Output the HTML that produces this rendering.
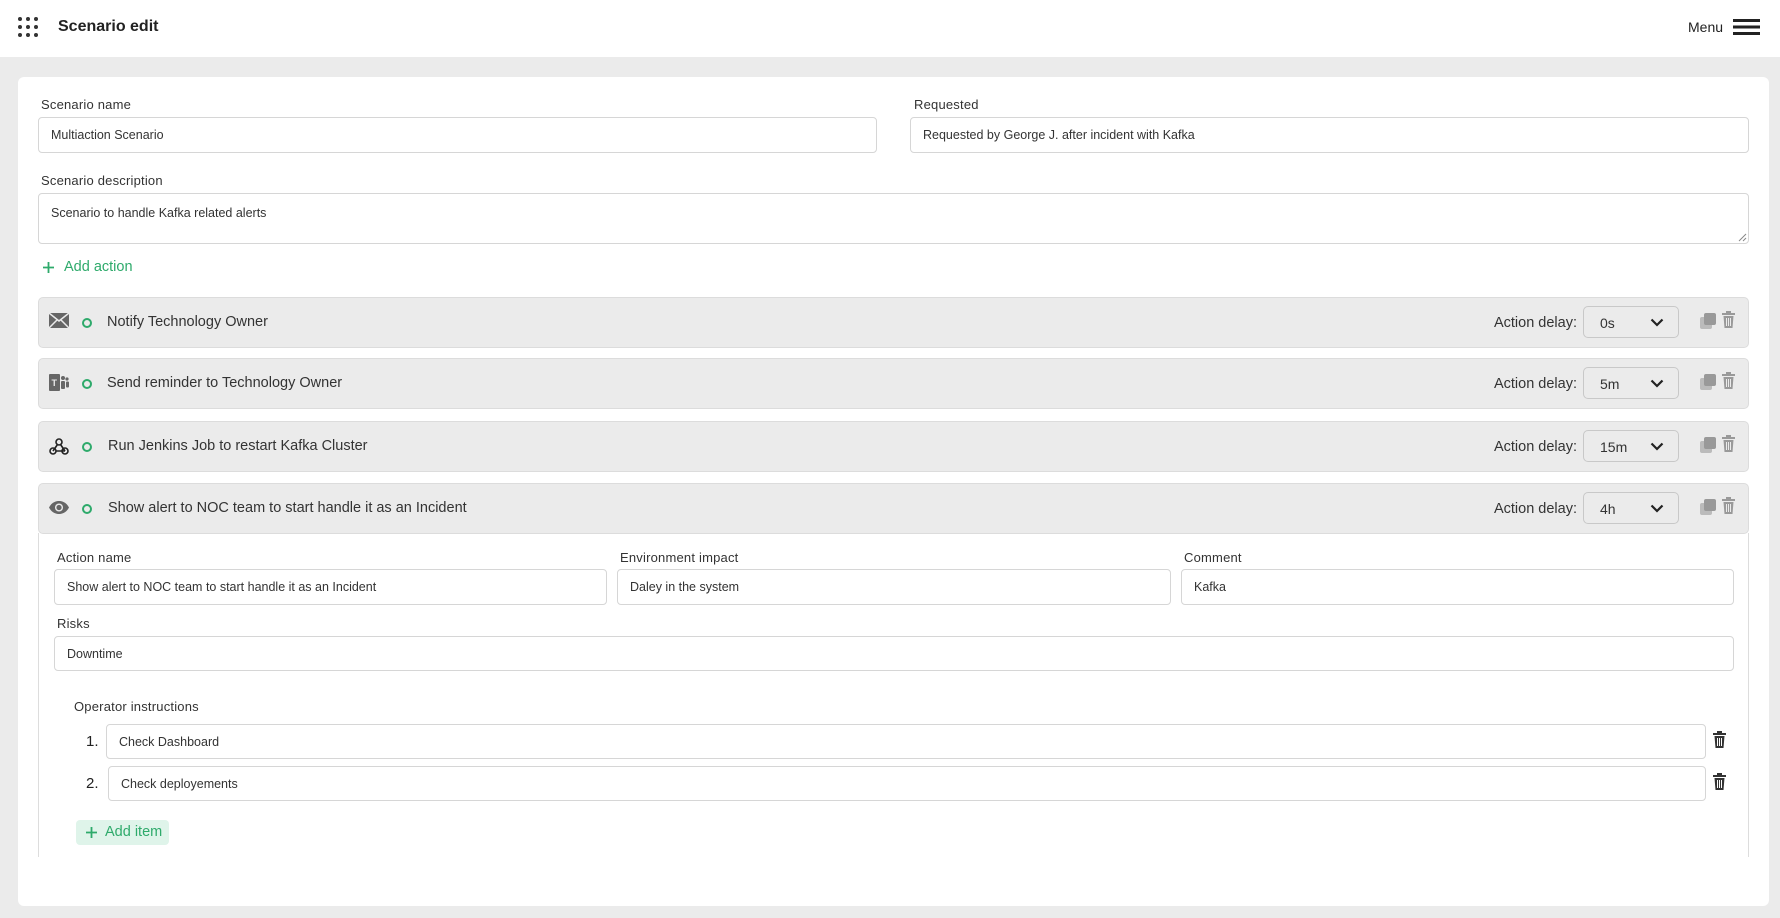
<!DOCTYPE html>
<html><head><meta charset="utf-8"><style>
*{box-sizing:border-box;margin:0;padding:0}
body{width:1780px;height:918px;background:#ebebeb;font-family:"Liberation Sans",sans-serif;color:#222;position:relative;overflow:hidden}
.a{position:absolute}
.hdr{left:0;top:0;width:1780px;height:57px;background:#fff}
.card{left:18px;top:77px;width:1751px;height:829px;background:#fff;border-radius:6px}
.lbl{font-size:13px;color:#333;letter-spacing:.2px}
.inp{background:#fff;border:1px solid #d6d6d6;border-radius:4px;font-size:12.5px;color:#333;padding-left:12px;display:flex;align-items:center}
.row{left:38px;width:1711px;height:51px;background:#ebebeb;border:1px solid #dcdcdc;border-radius:5px}
.row .t{position:absolute;left:68px;top:16px;font-size:14.5px;color:#333}
.row .ic{position:absolute;left:10px;top:15px}
.row .dot{position:absolute;left:43px;top:20px;width:10px;height:10px;border:2.5px solid #2eaa6b;border-radius:50%}
.row .dl{position:absolute;right:171px;top:17px;font-size:14.5px;color:#333}
.row .sel{position:absolute;left:1544px;top:8px;width:96px;height:32px;border:1px solid #c8c8c8;border-radius:5px;font-size:14px;color:#333;padding:8px 0 0 16px}
.row .sel svg{position:absolute;right:14px;top:11px}
.row .cp{position:absolute;left:1661px;top:15px}
.row .tr{position:absolute;left:1683px;top:13px}
</style></head><body>
<div class="a hdr">
 <svg class="a" style="left:18px;top:17px" width="20" height="20" viewBox="0 0 20 20" fill="#333"><circle cx="2" cy="2" r="2"/><circle cx="10" cy="2" r="2"/><circle cx="18" cy="2" r="2"/><circle cx="2" cy="10" r="2"/><circle cx="10" cy="10" r="2"/><circle cx="18" cy="10" r="2"/><circle cx="2" cy="18" r="2"/><circle cx="10" cy="18" r="2"/><circle cx="18" cy="18" r="2"/></svg>
 <div class="a" style="left:58px;top:18px;font-size:16px;font-weight:bold;color:#222">Scenario edit</div>
 <div class="a" style="left:1688px;top:19px;font-size:14px;color:#222">Menu</div>
 <svg class="a" style="left:1733px;top:19px" width="27" height="16"><rect y="0" width="27" height="3" fill="#222"/><rect y="6.5" width="27" height="3" fill="#222"/><rect y="13" width="27" height="3" fill="#222"/></svg>
</div>
<div class="a card"></div>
<div class="a lbl" style="left:41px;top:97px">Scenario name</div>
<div class="a inp" style="left:38px;top:117px;width:839px;height:36px">Multiaction Scenario</div>
<div class="a lbl" style="left:914px;top:97px">Requested</div>
<div class="a inp" style="left:910px;top:117px;width:839px;height:36px">Requested by George J. after incident with Kafka</div>
<div class="a lbl" style="left:41px;top:173px">Scenario description</div>
<div class="a inp" style="left:38px;top:193px;width:1711px;height:51px;align-items:flex-start;padding-top:12px">Scenario to handle Kafka related alerts</div>
<svg class="a" style="left:1738px;top:233px" width="9" height="9"><path d="M1 8L8 1M5 8L8 5" stroke="#888" stroke-width="1"/></svg>
<svg class="a" style="left:43px;top:262px" width="11" height="11"><path d="M5.5 0V11M0 5.5H11" stroke="#2eaa6b" stroke-width="1.8"/></svg>
<div class="a" style="left:64px;top:259px;font-size:14.5px;color:#2eaa6b">Add action</div>

<div class="a row" style="top:297px">
 <svg class="ic" width="20" height="15" viewBox="0 0 20 15"><rect width="20" height="15" fill="#666"/><path d="M0 0L10 8L20 0M0 15L8 7M20 15L12 7" stroke="#ebebeb" stroke-width="1.5" fill="none"/></svg>
 <div class="dot"></div><div class="t">Notify Technology Owner</div>
 <div class="dl">Action delay:</div><div class="sel">0s<svg width="14" height="9"><path d="M1.5 1.5L7 7L12.5 1.5" stroke="#222" stroke-width="2.2" fill="none"/></svg></div>
 <svg class="cp" width="16" height="16"><rect x="0" y="4" width="12" height="12" rx="2" fill="#bbb"/><rect x="4" y="0" width="12" height="12" rx="2" fill="#999"/></svg>
 <svg class="tr" width="13" height="17"><rect x="4" y="0" width="5" height="2" fill="#999"/><rect x="0" y="2" width="13" height="2" fill="#999"/><path d="M1.5 5H11.5L10.5 17H2.5Z" fill="#999"/><path d="M4.5 7V15M6.5 7V15M8.5 7V15" stroke="#ebebeb" stroke-width="1"/></svg>
</div>
<div class="a row" style="top:358px">
 <svg class="ic" width="20" height="17" viewBox="0 0 20 17"><rect x="0" y="0" width="11" height="17" rx="1" fill="#666"/><text x="2.5" y="12" font-size="9" font-weight="bold" fill="#ebebeb" font-family="Liberation Sans">T</text><circle cx="14" cy="4" r="2" fill="#666"/><circle cx="18" cy="5" r="1.6" fill="#666"/><rect x="12" y="7" width="4" height="8" rx="1" fill="#666"/><rect x="17" y="7.5" width="3" height="6" rx="1" fill="#666"/></svg>
 <div class="dot"></div><div class="t">Send reminder to Technology Owner</div>
 <div class="dl">Action delay:</div><div class="sel">5m<svg width="14" height="9"><path d="M1.5 1.5L7 7L12.5 1.5" stroke="#222" stroke-width="2.2" fill="none"/></svg></div>
 <svg class="cp" width="16" height="16"><rect x="0" y="4" width="12" height="12" rx="2" fill="#bbb"/><rect x="4" y="0" width="12" height="12" rx="2" fill="#999"/></svg>
 <svg class="tr" width="13" height="17"><rect x="4" y="0" width="5" height="2" fill="#999"/><rect x="0" y="2" width="13" height="2" fill="#999"/><path d="M1.5 5H11.5L10.5 17H2.5Z" fill="#999"/><path d="M4.5 7V15M6.5 7V15M8.5 7V15" stroke="#ebebeb" stroke-width="1"/></svg>
</div>
<div class="a row" style="top:421px">
 <svg class="ic" width="20" height="19" viewBox="0 0 20 19" fill="none" stroke="#222" stroke-width="1.6"><circle cx="10" cy="5" r="3"/><circle cx="4" cy="14" r="3"/><circle cx="16" cy="14" r="3"/><path d="M8.5 7.5L4 14M7 14H16M11.5 7.5L16 14"/></svg>
 <div class="dot"></div><div class="t" style="left:69px">Run Jenkins Job to restart Kafka Cluster</div>
 <div class="dl">Action delay:</div><div class="sel">15m<svg width="14" height="9"><path d="M1.5 1.5L7 7L12.5 1.5" stroke="#222" stroke-width="2.2" fill="none"/></svg></div>
 <svg class="cp" width="16" height="16"><rect x="0" y="4" width="12" height="12" rx="2" fill="#bbb"/><rect x="4" y="0" width="12" height="12" rx="2" fill="#999"/></svg>
 <svg class="tr" width="13" height="17"><rect x="4" y="0" width="5" height="2" fill="#999"/><rect x="0" y="2" width="13" height="2" fill="#999"/><path d="M1.5 5H11.5L10.5 17H2.5Z" fill="#999"/><path d="M4.5 7V15M6.5 7V15M8.5 7V15" stroke="#ebebeb" stroke-width="1"/></svg>
</div>
<div class="a row" style="top:483px">
 <svg class="ic" width="20" height="13" viewBox="0 0 20 13" style="top:17px"><path d="M0 6.5C3 1 7 0 10 0S17 1 20 6.5C17 12 13 13 10 13S3 12 0 6.5Z" fill="#666"/><circle cx="10" cy="6.5" r="4" fill="#ebebeb"/><circle cx="10" cy="6.5" r="2.6" fill="#666"/></svg>
 <div class="dot"></div><div class="t" style="left:69px">Show alert to NOC team to start handle it as an Incident</div>
 <div class="dl">Action delay:</div><div class="sel">4h<svg width="14" height="9"><path d="M1.5 1.5L7 7L12.5 1.5" stroke="#222" stroke-width="2.2" fill="none"/></svg></div>
 <svg class="cp" width="16" height="16"><rect x="0" y="4" width="12" height="12" rx="2" fill="#bbb"/><rect x="4" y="0" width="12" height="12" rx="2" fill="#999"/></svg>
 <svg class="tr" width="13" height="17"><rect x="4" y="0" width="5" height="2" fill="#999"/><rect x="0" y="2" width="13" height="2" fill="#999"/><path d="M1.5 5H11.5L10.5 17H2.5Z" fill="#999"/><path d="M4.5 7V15M6.5 7V15M8.5 7V15" stroke="#ebebeb" stroke-width="1"/></svg>
</div>
<div class="a" style="left:38px;top:533px;width:1px;height:324px;background:#ddd"></div>
<div class="a" style="left:1748px;top:533px;width:1px;height:324px;background:#ddd"></div>

<div class="a lbl" style="left:57px;top:550px">Action name</div>
<div class="a inp" style="left:54px;top:569px;width:553px;height:36px">Show alert to NOC team to start handle it as an Incident</div>
<div class="a lbl" style="left:620px;top:550px">Environment impact</div>
<div class="a inp" style="left:617px;top:569px;width:554px;height:36px">Daley in the system</div>
<div class="a lbl" style="left:1184px;top:550px">Comment</div>
<div class="a inp" style="left:1181px;top:569px;width:553px;height:36px">Kafka</div>
<div class="a lbl" style="left:57px;top:616px">Risks</div>
<div class="a inp" style="left:54px;top:636px;width:1680px;height:35px">Downtime</div>

<div class="a lbl" style="left:74px;top:699px">Operator instructions</div>
<div class="a" style="left:86px;top:733px;font-size:15px;color:#222">1.</div>
<div class="a inp" style="left:106px;top:724px;width:1600px;height:35px">Check Dashboard</div>
<div class="a" style="left:86px;top:775px;font-size:15px;color:#222">2.</div>
<div class="a inp" style="left:108px;top:766px;width:1598px;height:35px">Check deployements</div>
<svg class="a" style="left:1713px;top:731px" width="13" height="17"><rect x="4" y="0" width="5" height="2" fill="#333"/><rect x="0" y="2" width="13" height="2" fill="#333"/><path d="M1.5 5H11.5L10.5 17H2.5Z" fill="#333"/><path d="M4.5 7V15M6.5 7V15M8.5 7V15" stroke="#fff" stroke-width="1"/></svg>
<svg class="a" style="left:1713px;top:773px" width="13" height="17"><rect x="4" y="0" width="5" height="2" fill="#333"/><rect x="0" y="2" width="13" height="2" fill="#333"/><path d="M1.5 5H11.5L10.5 17H2.5Z" fill="#333"/><path d="M4.5 7V15M6.5 7V15M8.5 7V15" stroke="#fff" stroke-width="1"/></svg>
<div class="a" style="left:76px;top:820px;width:93px;height:25px;background:#dff4ea;border-radius:4px"></div>
<svg class="a" style="left:86px;top:827px" width="11" height="11"><path d="M5.5 0V11M0 5.5H11" stroke="#2eaa6b" stroke-width="1.8"/></svg>
<div class="a" style="left:105px;top:824px;font-size:14.5px;color:#2eaa6b">Add item</div>
</body></html>
